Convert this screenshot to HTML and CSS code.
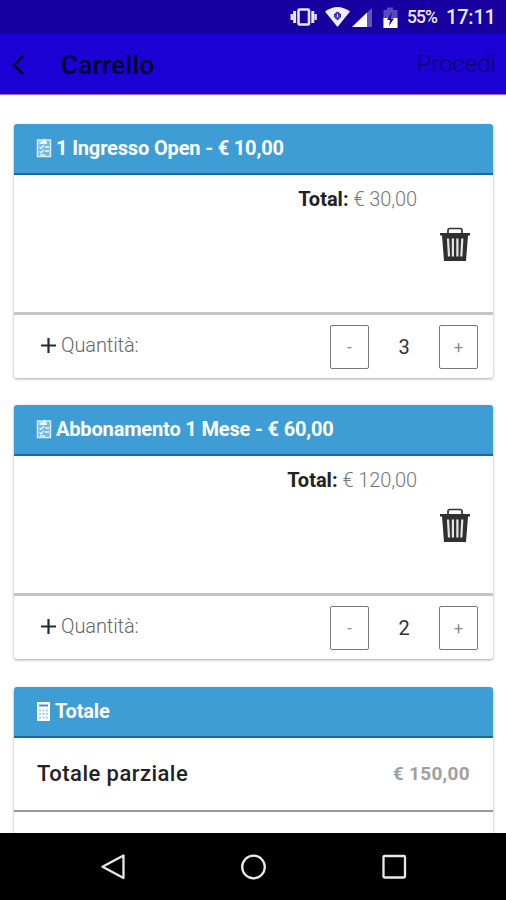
FILE: index.html
```html
<!DOCTYPE html>
<html lang="it">
<head>
<meta charset="utf-8">
<title>Carrello</title>
<link rel="stylesheet" href="styles.css">
</head>
<body>
<svg class="defs" width="0" height="0">
  <symbol id="list" viewBox="0 0 16 20">
    <path d="M1.500 2H14.500V18.500H1.500Z" fill="#76bae2" stroke="#d9edf9" stroke-width="1.500"/>
    <path d="M3.500 6V3.500H6L8.500 .5 11 4.500V6Z" fill="#eef8ff"/>
    <path d="M3.500 9l1.500 1.300L8 7M3.500 13.500l1.500 1.300L8 12M9 9H13M9 13H13M4 16.800H9" fill="none" stroke="#eef8ff" stroke-width="1.300"/>
  </symbol>
  <symbol id="trash" viewBox="0 0 30 35">
    <path d="M8 6V3.500Q8 1.500 10 1.500H20Q22 1.500 22 3.500V6" fill="none" stroke="#333" stroke-width="1.700"/>
    <path d="M0 6H30V8.500H28L26 34H4L2 8.500H0Z" fill="#303030"/>
    <path d="M8 11.500L9 29.500M12.900 11.500V29.500M17.400 11.500V29.500M22.300 11.500L21.300 29.500" stroke="#e4e4e4" stroke-width="2.200"/>
  </symbol>
</svg>
<div class="phone">
  <div class="status">
    <svg class="status-icons" width="112" height="34" viewBox="0 0 112 34">
      <g fill="none" stroke="#e6e2ff">
        <rect x="8.500" y="9.500" width="10.500" height="15" rx="1" stroke-width="2.600"/>
        <path d="M4.600 11V23M22.800 11V23" stroke-width="3"/>
        <path d="M1.800 14V20M25.600 14V20" stroke-width="2.500"/>
      </g>
      <path d="M35 11.500Q47.500 2.500 60 11.500L47.500 27Z" fill="#f1efff"/>
      <path d="M44 14.500H51M44.500 14.500Q47.500 10 50.500 14.500V17L47.500 20 44.500 17Z" fill="#5545b9" stroke="#3525a5"/>
      <path d="M47.500 14V17" stroke="#f1efff"/>
      <path d="M82 8V27H62Z" fill="#6253c4"/>
      <path d="M77 12.500V27H62Z" fill="#fff"/>
      <path d="M93.500 10H97V7.500H103V10H107.500V28H93.500Z" fill="#5b4abd"/>
      <path d="M93.500 18H107.500V28H93.500Z" fill="#fff"/>
      <path d="M102 12L97 20H100L99 26 104 18.500H101Z" fill="#1c0896"/>
    </svg>
    <span class="battery">55%</span>
    <span class="clock">17:11</span>
  </div>
  <header class="bar">
    <svg class="back" width="14" height="22" viewBox="0 0 14 22"><path d="M12 2L3 11 12 20" fill="none" stroke="#04002c" stroke-width="2.600"/></svg>
    <h1>Carrello</h1>
    <span class="next">Procedi</span>
  </header>
  <main>
    <section class="card">
      <h2><svg class="icon" width="16" height="20"><use href="#list"/></svg><span class="t1">1 Ingresso Open - € 10,00</span></h2>
      <div class="detail">
        <p><b>Total:</b> <span class="price">€ 30,00</span></p>
        <svg class="trash" width="30" height="35"><use href="#trash"/></svg>
      </div>
      <div class="quantity">
        <svg class="plus" width="15" height="15" viewBox="0 0 15 15"><path d="M7.500 0V15M0 7.500H15" stroke="#2a2a2a" stroke-width="2.200"/></svg>
        <span class="label">Quantità:</span>
        <span class="btn">-</span><span class="count">3</span><span class="btn">+</span>
      </div>
    </section>
    <section class="card second">
      <h2><svg class="icon" width="16" height="20"><use href="#list"/></svg><span class="t2">Abbonamento 1 Mese - € 60,00</span></h2>
      <div class="detail">
        <p><b>Total:</b> <span class="price">€ 120,00</span></p>
        <svg class="trash" width="30" height="35"><use href="#trash"/></svg>
      </div>
      <div class="quantity">
        <svg class="plus" width="15" height="15" viewBox="0 0 15 15"><path d="M7.500 0V15M0 7.500H15" stroke="#2a2a2a" stroke-width="2.200"/></svg>
        <span class="label">Quantità:</span>
        <span class="btn">-</span><span class="count">2</span><span class="btn">+</span>
      </div>
    </section>
    <section class="card total">
      <h2><svg class="icon calc" width="13" height="19" viewBox="0 0 13 19"><path d="M0 0H13V19H0Z" fill="#fff"/><path d="M2 3.500H11" stroke="#3e91c8" stroke-width="2"/><path d="M2 8.500H11M2 12H11M2 15.500H11" stroke="#a5d0ec" stroke-width="1.800" stroke-dasharray="2 1.500"/></svg><span class="t3">Totale</span></h2>
      <div class="subtotal"><b>Totale parziale</b><span>€ 150,00</span></div>
    </section>
  </main>
  <nav>
    <svg width="506" height="67" viewBox="0 0 506 67" fill="none" stroke="#e9e9e9" stroke-width="2.300" stroke-linejoin="round">
      <path d="M123.500 22.500V45L102.500 33.800Z"/><circle cx="253.500" cy="34" r="11.300"/><rect x="383.500" y="23" width="21.500" height="21.500" rx="1"/>
    </svg>
  </nav>
</div>
</body>
</html>
```
FILE: styles.css
```css
* { box-sizing: border-box; }
body { margin: 0; background: #fff; font-family: Roboto, "Liberation Sans", sans-serif; }
.defs { display: none; }
.phone { display: flex; flex-direction: column; width: 506px; height: 900px; overflow: hidden; }
.status { flex: none; display: flex; align-items: center; height: 34px; padding-left: 290px; background: #1800a0; color: #eeebff; white-space: nowrap; }
.battery { width: 39px; margin-left: 5px; font-size: 17.5px; font-weight: 500; letter-spacing: -.9px; }
.clock { font-size: 20px; font-weight: 500; letter-spacing: -.2px; }
.bar { flex: none; display: flex; align-items: center; height: 61px; padding: 0 10px 0 11px; background: #1d00d3; border-bottom: 1px solid #9a6bea; color: #04002c; }
.back { margin-top: 2px; }
h1 { flex: 1; margin: 1px 0 0 36px; font-size: 26px; line-height: 30px; font-weight: 500; letter-spacing: .3px; }
.next { font-size: 24px; font-weight: 300; color: #080069; }
main { flex: 1; min-height: 0; overflow: hidden; padding: 29px 13px 0 14px; }
.card { height: 254px; margin-bottom: 27px; border-radius: 3px; box-shadow: 0 1px 3px #0000005c; background: #fff; }
.card.second { margin-bottom: 28px; }
h2 { display: flex; align-items: center; height: 51px; margin: 0; padding: 0 0 1px 22px; border-bottom: 2px solid #196a98; border-radius: 3px 3px 0 0; background: #3e9dd5; color: #fff; font-size: 20px; font-weight: 700; letter-spacing: -.16px; white-space: nowrap; }
.icon { flex: none; margin-right: 4px; }
.calc { margin: 0 5px 0 1px; }
.detail { display: flex; flex-direction: column; align-items: flex-end; height: 140px; padding: 12px 23px 0 0; border-bottom: 3px solid #c4c4c4; }
p { margin: 0 53px 0 0; font-size: 20px; line-height: 24px; color: #222; }
p b { font-weight: 700; }
.price { font-weight: 300; letter-spacing: -.1px; color: #777; }
.trash { margin-top: 16px; }
.quantity { display: flex; align-items: center; height: 63px; padding: 1px 15px 0 27px; }
.plus { margin: 0 5px 4px 0; }
.label { flex: 1; margin-bottom: 4px; font-size: 20px; font-weight: 300; letter-spacing: -.1px; color: #666; }
.btn { display: flex; align-items: center; justify-content: center; width: 39px; height: 44px; border: 1px solid #777; border-radius: 2px; font-size: 16px; color: #888; }
.count { width: 70px; text-align: center; font-size: 20px; color: #333; }
.subtotal { display: flex; align-items: center; justify-content: space-between; height: 74px; padding: 0 23px 2px; border-bottom: 2px solid #999; font-size: 22px; color: #222; }
.subtotal b { font-weight: 500; letter-spacing: .45px; }
.subtotal span { font-size: 19px; font-weight: 700; letter-spacing: .3px; color: #a0a0a0; }
nav { flex: none; height: 67px; background: #000; }
nav svg { display: block; }
```
